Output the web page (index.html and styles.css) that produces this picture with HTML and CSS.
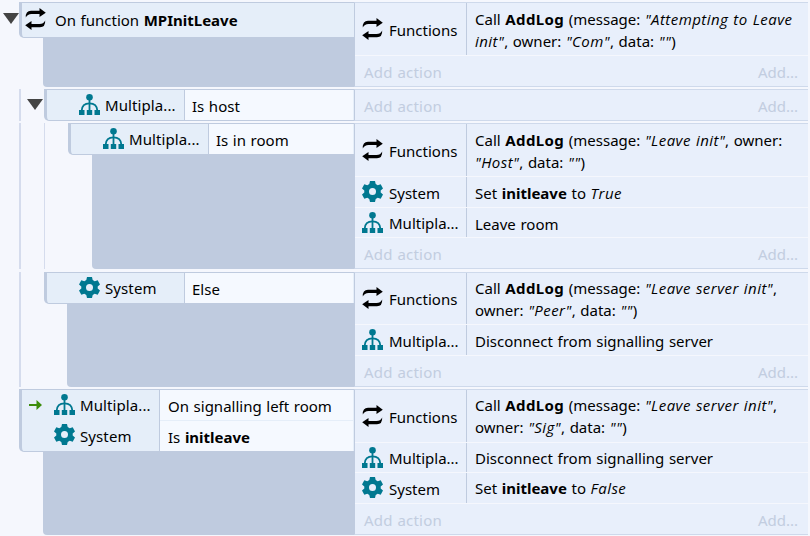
FILE: index.html
```html
<!DOCTYPE html>
<html lang="en">
<head>
    <meta charset="UTF-8">
    <meta name="viewport" content="width=device-width, initial-scale=1.0">
    <title>Event sheet</title>
    <link rel="stylesheet" href="styles.css">
</head>
<body>
    <!-- Shared icons -->
    <svg class="defs">
        <symbol id="functions" viewBox="0 0 21 22">
            <path d="M0.800 9.500Q0.500 2.800 6 2.800H14.500V0L20.800 4.800L14.500 9V6H6.500Q2.500 6 0.800 9.500ZM20.200 12.500Q20.500 19.200 15 19.200H6.500V22L0.200 17.200L6.500 13V16H14.500Q18.500 16 20.200 12.500Z"/>
        </symbol>
        <symbol id="multiplayer" viewBox="0 0 21 21">
            <circle cx="10.500" cy="3.300" r="3.300"/>
            <path d="M9.600 6h1.800v10H9.600zM0 16h5.500v5H0zM7.800 16h5.400v5H7.800zM15.500 16H21v5h-5.500z"/>
            <path class="arc" d="M2.700 16.500C3 11.500 6 9.300 10.500 9.300S18 11.500 18.300 16.500"/>
        </symbol>
        <symbol id="system" viewBox="0 0 21 21">
            <path fill-rule="evenodd" d="M8 0h5l.7 3 2 1.200 3-1L21 7.500 18.700 9.500v2L21 13.500l-2.300 4.300-3-1-2 1.200-.7 3H8l-.7-3-2-1.200-3 1L0 13.500l2.300-2v-2L0 7.500l2.300-4.300 3 1 2-1.200zM10.500 7a3.500 3.500 0 1 0 0 7a3.500 3.500 0 1 0 0-7z"/>
        </symbol>
    </svg>

    <div class="sheet">
        <div class="event">
            <div class="gutter"><span class="toggle"></span></div>
            <div class="left">
                <div class="conditions">
                    <div class="condition function-head">
                        <svg class="icon black"><use href="#functions"/></svg>
                        <span>On function <b>MPInitLeave</b></span>
                    </div>
                </div>
                <div class="block"></div>
            </div>
            <div class="actions">
                <div class="action tall">
                    <div class="object"><svg class="icon black"><use href="#functions"/></svg><span>Functions</span></div>
                    <div class="text">Call <b class="call">AddLog</b> (message: <i>"Attempting to Leave<br>init"</i>, owner: <i>"Com"</i>, data: <i>""</i>)</div>
                </div>
                <div class="add"><span>Add action</span><span>Add...</span></div>
            </div>
        </div>

        <div class="event level-1 host">
            <div class="gutter"><span class="guide"></span><span class="toggle"></span></div>
            <div class="left">
                <div class="conditions">
                    <div class="condition">
                        <div class="object"><svg class="icon"><use href="#multiplayer"/></svg><span>Multipla...</span></div>
                        <div class="text">Is host</div>
                    </div>
                </div>
            </div>
            <div class="actions">
                <div class="add"><span>Add action</span><span>Add...</span></div>
            </div>
        </div>

        <div class="event level-2">
            <div class="gutter"><span class="guide"></span><span class="guide thin"></span></div>
            <div class="left">
                <div class="conditions">
                    <div class="condition">
                        <div class="object"><svg class="icon"><use href="#multiplayer"/></svg><span>Multipla...</span></div>
                        <div class="text">Is in room</div>
                    </div>
                </div>
                <div class="block"></div>
            </div>
            <div class="actions">
                <div class="action tall">
                    <div class="object"><svg class="icon black"><use href="#functions"/></svg><span>Functions</span></div>
                    <div class="text">Call <b class="call">AddLog</b> (message: <i>"Leave init"</i>, owner:<br><i>"Host"</i>, data: <i>""</i>)</div>
                </div>
                <div class="action">
                    <div class="object"><svg class="icon"><use href="#system"/></svg><span>System</span></div>
                    <div class="text">Set <b>initleave</b> to <i>True</i></div>
                </div>
                <div class="action short">
                    <div class="object"><svg class="icon"><use href="#multiplayer"/></svg><span>Multipla...</span></div>
                    <div class="text">Leave room</div>
                </div>
                <div class="add"><span>Add action</span><span>Add...</span></div>
            </div>
        </div>

        <div class="event level-1 else">
            <div class="gutter"><span class="guide"></span></div>
            <div class="left">
                <div class="conditions">
                    <div class="condition">
                        <div class="object"><svg class="icon"><use href="#system"/></svg><span>System</span></div>
                        <div class="text">Else</div>
                    </div>
                </div>
                <div class="block"></div>
            </div>
            <div class="actions">
                <div class="action tall">
                    <div class="object"><svg class="icon black"><use href="#functions"/></svg><span>Functions</span></div>
                    <div class="text">Call <b class="call">AddLog</b> (message: <i>"Leave server init"</i>,<br>owner: <i>"Peer"</i>, data: <i>""</i>)</div>
                </div>
                <div class="action">
                    <div class="object"><svg class="icon"><use href="#multiplayer"/></svg><span>Multipla...</span></div>
                    <div class="text">Disconnect from signalling server</div>
                </div>
                <div class="add"><span>Add action</span><span>Add...</span></div>
            </div>
        </div>

        <div class="event signal">
            <div class="gutter"></div>
            <div class="left">
                <div class="conditions">
                    <div class="condition">
                        <div class="object">
                            <svg class="trigger" viewBox="0 0 13 10"><path d="M0 4h7.500V0L13 5L7.500 10V6H0z"/></svg>
                            <svg class="icon"><use href="#multiplayer"/></svg><span>Multipla...</span>
                        </div>
                        <div class="text">On signalling left room</div>
                    </div>
                    <div class="condition">
                        <div class="object"><svg class="icon"><use href="#system"/></svg><span>System</span></div>
                        <div class="text">Is <b>initleave</b></div>
                    </div>
                </div>
                <div class="block"></div>
            </div>
            <div class="actions">
                <div class="action tall">
                    <div class="object"><svg class="icon black"><use href="#functions"/></svg><span>Functions</span></div>
                    <div class="text">Call <b class="call">AddLog</b> (message: <i>"Leave server init"</i>,<br>owner: <i>"Sig"</i>, data: <i>""</i>)</div>
                </div>
                <div class="action short">
                    <div class="object"><svg class="icon"><use href="#multiplayer"/></svg><span>Multipla...</span></div>
                    <div class="text">Disconnect from signalling server</div>
                </div>
                <div class="action">
                    <div class="object"><svg class="icon"><use href="#system"/></svg><span>System</span></div>
                    <div class="text">Set <b>initleave</b> to <i>False</i></div>
                </div>
                <div class="add"><span>Add action</span><span>Add...</span></div>
            </div>
        </div>
    </div>
</body>
</html>
```
FILE: styles.css
```css
:root {
    --page: #f5f7fd;
    --line: #bfcbdf;
    --guide: #d5dced;
    --object: #e5eef9;
    --action: #e8effb;
    --teal: #007890;
}

* {
    box-sizing: border-box;
}

body {
    margin: 0;
    background: var(--page);
    color: #000;
    font-family: "Noto Sans", "Open Sans", sans-serif;
    font-size: 15px;
    line-height: 22px;
    word-spacing: 0.7px;
    overflow: hidden;
}

i {
    font-family: "Open Sans", "Noto Sans", sans-serif;
    letter-spacing: 0.45px;
    line-height: 1;
}

.call {
    letter-spacing: 0.4px;
}

.defs {
    display: none;
}

.sheet {
    width: 808px;
    padding-top: 2px;
    display: flex;
    flex-direction: column;
    gap: 2px;
}

.event {
    display: flex;
    height: 85px;
}

.host {
    height: 32px;
}

.level-2 {
    height: 146px;
}

.else {
    height: 115px;
    margin-top: 1px;
}

.signal {
    height: 146px;
}

/* Indentation, guide lines and collapse arrows */
.gutter {
    display: flex;
    width: 19px;
    flex-shrink: 0;
}

.level-1 .gutter {
    width: 44px;
}

.level-2 .gutter {
    width: 68px;
}

.guide {
    width: 2px;
    margin: 0 0 0 19px;
    background: var(--guide);
}

.guide.thin {
    width: 1px;
    margin-left: 23px;
}

.toggle {
    width: 16px;
    height: 11px;
    margin: 11px 0 0 3px;
    background: #444;
    clip-path: polygon(0 0, 100% 0, 50% 100%);
}

.host .toggle {
    margin: 10px 0 0 6px;
}

/* Conditions */
.left {
    display: flex;
    flex-direction: column;
    flex: 1;
    min-width: 0;
}

.conditions {
    border: 1px solid var(--line);
    border-left-width: 3px;
    border-right: 0;
    border-bottom-left-radius: 5px;
    background: var(--object);
}

.condition {
    display: flex;
    height: 30px;
    line-height: 32px;
}

.signal .condition + .condition {
    height: 31px;
}

.condition.function-head {
    height: 34px;
    padding-left: 3px;
    align-items: center;
    gap: 9px;
    line-height: 22px;
}

.condition .object {
    display: flex;
    width: 138px;
    padding-right: 8px;
    justify-content: flex-start;
    align-items: center;
    gap: 5px;
    padding-left: 32px;
    border-right: 1px solid var(--line);
}

.condition .object span {
    letter-spacing: 0.1px;
}

.condition .text {
    flex: 1;
    padding-left: 7px;
    margin-right: 1px;
    background: #f5f9ff;
}

.condition + .condition .text {
    border-top: 1px solid var(--object);
}

.signal .condition .text {
    padding-left: 8px;
}

.signal .object:has(.trigger) {
    padding-left: 7px;
}

.trigger {
    width: 13px;
    height: 10px;
    margin-right: 7px;
    fill: #3c8c0c;
}

.block {
    flex: 1;
    margin-left: 24px;
    border-bottom-left-radius: 4px;
    background: var(--line);
}

.else .block {
    margin-left: 23px;
}

/* Actions */
.actions {
    display: flex;
    flex-direction: column;
    width: 454px;
    border: 1px solid #ced9eb;
    border-left-color: var(--line);
    border-right: 0;
    background: var(--action);
}

.action {
    display: flex;
    height: 31px;
    align-items: stretch;
    border-bottom: 1px solid var(--page);
}

.action.short {
    height: 30px;
}

.action.tall {
    height: 53px;
}

.else .action.tall {
    height: 52px;
}

.action .object {
    display: flex;
    width: 112px;
    align-items: center;
    gap: 6px;
    padding: 1px 0 0 7px;
    border-right: 1px solid var(--line);
}

.action .text {
    padding: 5px 0 0 8px;
    white-space: nowrap;
}

.else .action.tall .text,
.signal .action .text {
    padding-top: 4px;
}

.add {
    display: flex;
    flex: 1;
    justify-content: space-between;
    align-items: center;
    padding: 1px 10px 0 9px;
    color: #c2cde0;
}

.add span:first-child {
    letter-spacing: 0.2px;
}

.icon {
    width: 21px;
    height: 21px;
    margin-bottom: 2px;
    flex-shrink: 0;
    fill: var(--teal);
}

.icon.black {
    height: 22px;
    fill: #000;
}

.arc {
    fill: none;
    stroke: var(--teal);
    stroke-width: 1.8;
}
```
